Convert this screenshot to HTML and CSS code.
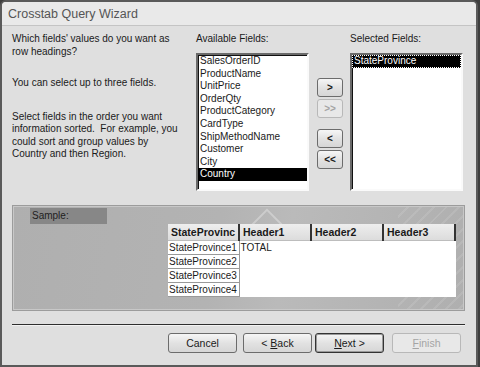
FILE: index.html
```html
<!DOCTYPE html>
<html lang="en">
<head>
  <meta charset="UTF-8">
  <title>Crosstab Query Wizard</title>
  <link rel="stylesheet" href="styles.css">
</head>
<body>

  <div class="window">
    <div class="titlebar">Crosstab Query Wizard</div>

    <div class="content">
      <!-- TOP: intro + field pickers -->
      <div class="top">
        <div class="intro">
          <p>Which fields' values do you want as<br>row headings?</p>
          <p>You can select up to three fields.</p>
          <p>Select fields in the order you want<br>information sorted.&nbsp; For example, you<br>could sort and group values by<br>Country and then Region.</p>
        </div>

        <div class="field-col">
          <div class="label">Available Fields:</div>
          <ul class="listbox">
            <li>SalesOrderID</li>
            <li>ProductName</li>
            <li>UnitPrice</li>
            <li>OrderQty</li>
            <li>ProductCategory</li>
            <li>CardType</li>
            <li>ShipMethodName</li>
            <li>Customer</li>
            <li>City</li>
            <li class="selected">Country</li>
          </ul>
        </div>

        <div class="move-btns">
          <button class="small">&gt;</button>
          <button class="small" disabled>&gt;&gt;</button>
          <button class="small gap">&lt;</button>
          <button class="small">&lt;&lt;</button>
        </div>

        <div class="field-col">
          <div class="label">Selected Fields:</div>
          <ul class="listbox">
            <li class="selected focus">StateProvince</li>
          </ul>
        </div>
      </div>

      <!-- SAMPLE PREVIEW -->
      <div class="sample">
        <div class="sample-label">Sample:</div>
        <div class="chevron"></div>
        <table class="grid">
          <tr>
            <th>StateProvinc</th>
            <th>Header1</th>
            <th>Header2</th>
            <th>Header3</th>
          </tr>
          <tr><td class="rowhead">StateProvince1</td><td>TOTAL</td><td></td><td></td></tr>
          <tr><td class="rowhead">StateProvince2</td><td></td><td></td><td></td></tr>
          <tr><td class="rowhead">StateProvince3</td><td></td><td></td><td></td></tr>
          <tr><td class="rowhead">StateProvince4</td><td></td><td></td><td></td></tr>
        </table>
      </div>

      <div class="rule"></div>

      <div class="actions">
        <button>Cancel</button>
        <button>&lt; <u>B</u>ack</button>
        <button class="default"><u>N</u>ext &gt;</button>
        <button disabled><u>F</u>inish</button>
      </div>
    </div>
  </div>

</body>
</html>
```

FILE: styles.css
```css
:root {
  --face: #dfdfdf;
  --title: #e9e9e9;
  --text: #1a1a1a;
  --dim: #a4a4a4;
}
html {
  background: #3e3e3e;
}
body {
  margin: 0;
  font-family: 'Liberation Sans', Arial, sans-serif;
  font-size: 10px;
  color: var(--text);
}
.window {
  width: 474px;
  height: 363px;
  border: 2px solid #5a5a5a;
  border-radius: 6px 6px 0 0;
  background: var(--face);
  overflow: hidden;
}
.titlebar {
  height: 23px;
  line-height: 24px;
  padding-left: 6px;
  background: var(--title);
  border-bottom: 1px solid #c4c4c4;
  color: #555;
  font-size: 12.5px;
}
.content {
  padding: 7px 0 0 10px;
}
.top {
  display: flex;
  height: 159px;
}
.intro {
  width: 184px;
  line-height: 12.5px;
}
.intro p {
  margin: 0 0 19px;
}
.intro p:nth-child(2) {
  margin-bottom: 21px;
}
.label {
  line-height: 12.5px;
  height: 13px;
  margin-bottom: 7px;
}
.listbox {
  list-style: none;
  margin: 0;
  padding: 0;
  width: 109px;
  height: 134px;
  background: #fff;
  border: 2px solid #222;
  border-color: #6a6a6a #fafafa #fafafa #6a6a6a;
  box-shadow: inset 1px 1px 0 #111;
  line-height: 12.6px;
}
.listbox li {
  padding-left: 2px;
}
.listbox li.selected {
  background: #000;
  color: #fff;
}
.listbox li.focus {
  outline: 1px dotted #fff;
  outline-offset: -1px;
}
.move-btns {
  display: flex;
  flex-direction: column;
  gap: 2px;
  margin: 45px 7px 0 8px;
}
button {
  font-family: inherit;
  font-size: 10px;
  color: var(--text);
  background: linear-gradient(#f6f6f6, #e2e2e2 50%, #d6d6d6);
  border: 1px solid #6c6c6c;
  border-radius: 3px;
  padding: 0;
}
button:disabled {
  color: var(--dim);
  border-color: #b8b8b8;
  background: #e8e8e8;
}
.small {
  width: 26px;
  height: 19px;
  font-weight: bold;
}
.small.gap {
  margin-top: 9px;
}
.sample {
  position: relative;
  width: 449px;
  height: 102px;
  margin-top: 13px;
  border: 1px solid #9c9c9c;
  box-shadow: inset 0 0 0 1px #c8c8c8;
  background:
    repeating-linear-gradient(135deg, transparent 0 7px, rgba(255,255,255,0.10) 7px 9px) 385px 0 / 66px 100% no-repeat,
    linear-gradient(100deg, #afafaf 0%, #b3b3b3 45%, #bababa 60%, #afafaf 100%);
  padding: 1px;
}
.sample-label {
  width: 75px;
  height: 16px;
  line-height: 15px;
  margin: 1px 0 0 16px;
  padding-left: 2px;
  background: #878787;
  color: #1e1e1e;
}
.chevron {
  position: absolute;
  left: 243px;
  top: 7px;
  width: 20px;
  height: 20px;
  border-left: 2px solid rgba(255,255,255,0.3);
  border-top: 2px solid rgba(255,255,255,0.3);
  transform: rotate(45deg);
}
.grid {
  position: relative;
  border-collapse: collapse;
  margin: 0 0 0 154px;
  background: #fff;
  font-size: 10px;
}
.grid th {
  width: 67px;
  height: 16px;
  padding: 0 0 0 3px;
  text-align: left;
  background: linear-gradient(#eeeeee, #dcdcdc);
  border-right: 2px solid #333;
  border-bottom: 1px solid #bdbdbd;
  font-weight: bold;
  font-size: 10.5px;
}
.grid td {
  height: 13px;
  padding: 0 0 0 1px;
}
.grid td.rowhead {
  border-right: 1px solid #999;
  border-bottom: 1px solid #999;
}
.rule {
  width: 453px;
  height: 1px;
  margin-top: 13px;
  background: #2e2e2e;
  border-bottom: 1px solid #f3f3f3;
}
.actions {
  display: flex;
  gap: 6px;
  width: 449px;
  justify-content: flex-end;
  margin-top: 7px;
}
.actions button {
  width: 69px;
  height: 20px;
  font-size: 10.5px;
}
.actions button.default {
  border: 1px solid #333;
  box-shadow: inset 0 0 0 1px #9a9a9a;
}
.actions button:nth-child(3) {
  margin-left: -3px;
}
.actions button:disabled {
  margin-left: 2px;
}
```
